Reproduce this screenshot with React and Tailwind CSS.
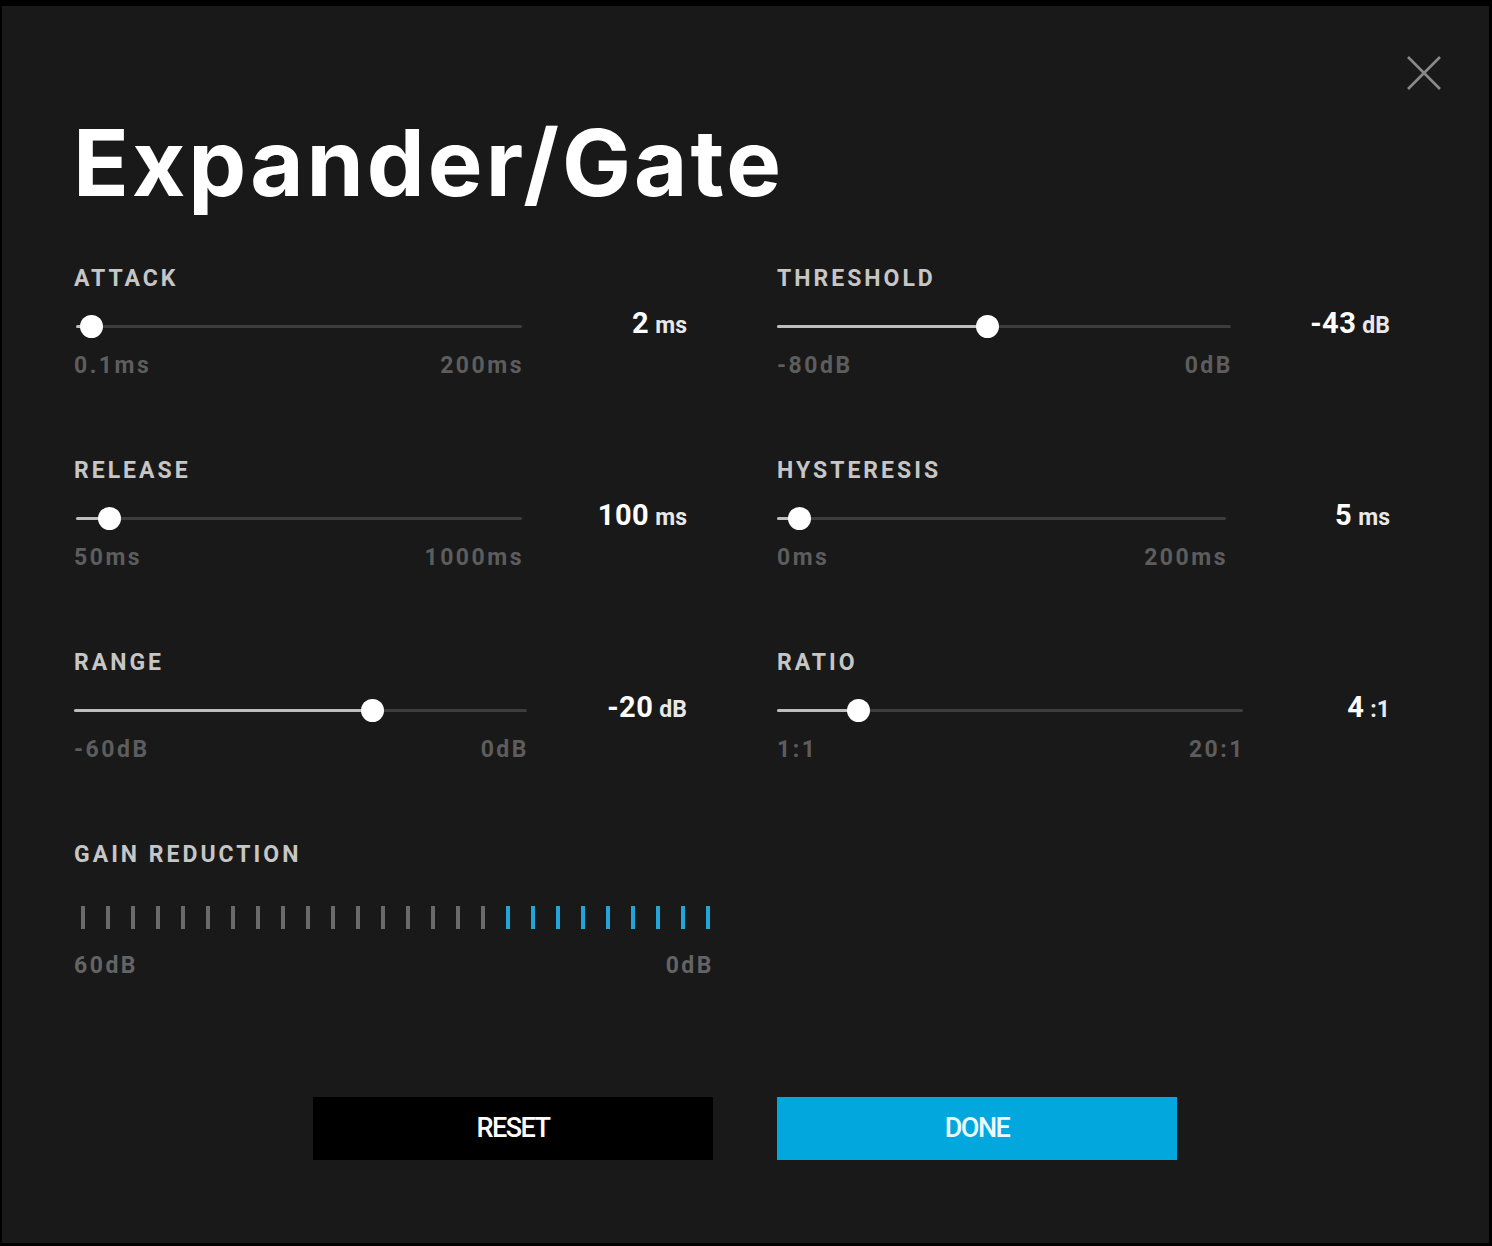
const sliders = [
  { label: "ATTACK", min: 0.1, max: 200, value: 2, num: "2", unit: "ms", lo: "0.1ms", hi: "200ms", offset: 2, width: 446 },
  { label: "THRESHOLD", min: -80, max: 0, value: -43, num: "-43", unit: "dB", lo: "-80dB", hi: "0dB", offset: 0, width: 454 },
  { label: "RELEASE", min: 50, max: 1000, value: 100, num: "100", unit: "ms", lo: "50ms", hi: "1000ms", offset: 2, width: 446 },
  { label: "HYSTERESIS", min: 0, max: 200, value: 5, num: "5", unit: "ms", lo: "0ms", hi: "200ms", offset: 0, width: 449 },
  { label: "RANGE", min: -60, max: 0, value: -20, num: "-20", unit: "dB", lo: "-60dB", hi: "0dB", offset: 0, width: 453 },
  { label: "RATIO", min: 1, max: 20, value: 4, num: "4", unit: ":1", lo: "1:1", hi: "20:1", offset: 0, width: 466 },
];

const THUMB = 23;

function Slider({ s }) {
  const frac = (s.value - s.min) / (s.max - s.min);
  const center = THUMB / 2 + frac * (s.width - THUMB);
  return (
    <div className="h-[192px]">
      <div className="h-[22px] text-[23px] leading-[22px] font-bold tracking-[3px] text-[#c6c6c6]">
        {s.label}
      </div>
      <div className="mt-[25px] flex h-[24px] items-center">
        <div className="relative h-[24px]" style={{ width: s.width, marginLeft: s.offset }}>
          <div className="absolute left-0 right-0 top-[10px] h-[3px] rounded-full bg-[#3d3d3d]" />
          <div className="absolute left-0 top-[10px] h-[3px] rounded-full bg-[#bdbdbd]" style={{ width: center }} />
          <div
            className="absolute top-0 h-[23px] w-[23px] rounded-full bg-white"
            style={{ left: center - THUMB / 2 }}
          />
        </div>
        <div className="-mt-[8px] ml-auto flex items-baseline gap-[6px] text-white">
          <span className="text-[29px] font-bold leading-none tracking-[0.5px]">{s.num}</span>
          <span className="text-[23px] font-bold leading-none text-[#e8e8e8]">{s.unit}</span>
        </div>
      </div>
      <div
        className="mt-[16px] flex justify-between text-[23px] leading-[22px] font-bold tracking-[2.5px] text-[#5d5d5d]"
        style={{ width: s.width + s.offset }}
      >
        <span>{s.lo}</span>
        <span className="-mr-[2px]">{s.hi}</span>
      </div>
    </div>
  );
}

export default function App() {
  const bars = Array.from({ length: 26 }, (_, i) => i >= 17);
  return (
    <div
      className="h-[1246px] w-[1492px] bg-black pb-[3px] pl-[2px] pr-[3px] pt-[6px]"
      style={{ fontFamily: "Roboto, 'Liberation Sans', sans-serif" }}
    >
      <div className="relative h-full bg-[#191919]">
        {/* close */}
        <button className="absolute right-[48px] top-[50px] h-[34px] w-[34px]">
          <svg viewBox="0 0 34 34" width="34" height="34">
            <path d="M1 1 L33 33 M33 1 L1 33" stroke="#8a8a8a" strokeWidth="2.6" fill="none" />
          </svg>
        </button>

        <div className="pl-[72px] pt-[111px]">
          <h1
            className="ml-[-1px] h-[92px] text-[92px] font-bold leading-[92px] tracking-[3px] text-white"
            style={{ fontFamily: "Inter, 'Open Sans', sans-serif" }}
          >
            Expander/Gate
          </h1>

          <div className="mt-[59px] grid grid-cols-[613px_613px] gap-x-[90px]">
            {sliders.map((s) => (
              <Slider key={s.label} s={s} />
            ))}
          </div>

          <div>
            <div className="h-[22px] text-[23px] leading-[22px] font-bold tracking-[3px] text-[#c6c6c6]">
              GAIN REDUCTION
            </div>
            <div className="ml-[7px] mt-[40px] flex h-[23px] gap-[21px]">
              {bars.map((on, i) => (
                <div key={i} className={on ? "h-full w-[4px] bg-[#22a5d8]" : "h-full w-[4px] bg-[#6a6a6a]"} />
              ))}
            </div>
            <div className="mt-[26px] flex w-[638px] justify-between text-[23px] leading-[22px] font-bold tracking-[2.5px] text-[#646464]">
              <span>60dB</span>
              <span className="-mr-[2px]">0dB</span>
            </div>
          </div>
        </div>

        <div className="mt-[120px] flex gap-[64px] pl-[311px]">
          <button className="h-[63px] w-[400px] bg-black text-[27px] font-medium tracking-[-1.5px] text-white">
            RESET
          </button>
          <button className="h-[63px] w-[400px] bg-[#02a7de] text-[27px] font-medium tracking-[-1.5px] text-[#eef9ff]">
            DONE
          </button>
        </div>
      </div>
    </div>
  );
}
